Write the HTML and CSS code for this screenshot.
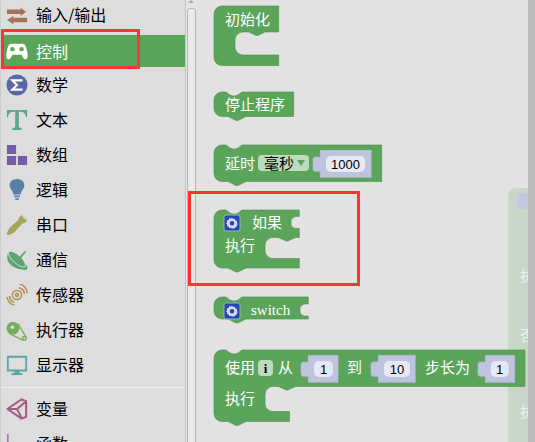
FILE: index.html
```html
<!DOCTYPE html>
<html lang="zh">
<head>
<meta charset="utf-8">
<title>Blocks</title>
<link rel="stylesheet" href="styles.css">
</head>
<body>
<div class="app">
  <aside class="toolbox">
    <nav class="cats">
      <div class="cat"><svg class="ico" viewBox="0 0 24 24"><path fill="#a5745b" d="M1 6h15V4l6 4.500-6 4.500v-2H1zM23 15H8v-2l-7 4.500L8 22v-2h15z"/></svg><span>输入/输出</span></div>
      <div class="cat on"><svg class="ico" viewBox="0 0 24 24"><path fill="#fff" d="M6 4h12c3 0 4 3 5 8s1 8-1 9-4-3-5-5H7c-1 2-3 6-5 5s-2-4-1-9 2-8 5-8z"/><circle cx="7" cy="10" r="2.400" fill="#5ba55b"/><circle cx="17" cy="10" r="2.400" fill="#5ba55b"/></svg><span>控制</span></div>
      <div class="cat"><svg class="ico" viewBox="0 0 24 24"><circle cx="12" cy="12" r="11.500" fill="#5b67a5"/><path fill="none" stroke="#fff" stroke-width="2.400" d="M18 7H7l5 5-5 5h11"/></svg><span>数学</span></div>
      <div class="cat"><svg class="ico" viewBox="0 0 24 24"><path fill="#5ba58c" d="M1 1h22v8h-1c-1-4-2-6-7-6h-1v17l3 1v2H7v-2l3-1V3H9C4 3 3 5 2 9H1z"/></svg><span>文本</span></div>
      <div class="cat"><svg class="ico" viewBox="0 0 24 24"><path fill="#745ba5" d="M1 1h10v10H1zM1 13h10v10H1zM13 13h10v10H13z"/></svg><span>数组</span></div>
      <div class="cat"><svg class="ico" viewBox="0 0 24 24"><path fill="#5b80a5" d="M12 0c5 0 8 3 8 7 0 4-4 6-4 10H8c0-4-4-6-4-10 0-4 3-7 8-7z"/><path fill="#5b80a5" d="M9 18h6v2H9zM10 21h4v2h-4z"/></svg><span>逻辑</span></div>
      <div class="cat"><svg class="ico" viewBox="0 0 24 24"><path fill="#a5a55b" d="M17 1l6 6-3 3-2 0-7 8c-3 3-6 5-10 5 0-4 2-7 5-10l8-7 0-2z"/><path fill="none" stroke="#ddd" d="M18 3l3 3"/></svg><span>串口</span></div>
      <div class="cat"><svg class="ico" viewBox="0 0 24 24"><path fill="#5ba574" d="M2 5c-3 8 3 17 20 18 1-1 2-3 1-5L2 5z"/><ellipse cx="12" cy="11" rx="12" ry="4.500" transform="rotate(42 12 11)" fill="#5ba574" stroke="#eee" stroke-width=".8"/><path fill="#5ba574" d="M13 10l8-8 1 1-7 9z"/></svg><span>通信</span></div>
      <div class="cat"><svg class="ico" viewBox="0 0 24 24"><g fill="none" stroke="#b08d50" stroke-width="1.600"><circle cx="12" cy="12" r="1.600"/><circle cx="12" cy="12" r="5"/><path d="M14 4c4 1 6 4 6 7M15 0c5 1 8 6 8 10M4 13c0 3 2 6 5 7M1 14c1 5 4 8 8 9"/></g></svg><span>传感器</span></div>
      <div class="cat"><svg class="ico" viewBox="0 0 24 24"><circle cx="7.500" cy="10" r="7" fill="#7bac5f"/><circle cx="7" cy="9" r="2" fill="#ddd"/><circle cx="20" cy="21" r="2" fill="none" stroke="#7bac5f" stroke-width="1.600"/><path fill="none" stroke="#7bac5f" stroke-width="1.600" d="M13 5l9 15M4 16l14 7"/></svg><span>执行器</span></div>
      <div class="cat"><svg class="ico" viewBox="0 0 24 24"><path fill="#5ba5a5" d="M1 2h22v17H1zM3 4v13h18V4zM9 19h6v2h3v2H6v-2h3z"/></svg><span>显示器</span></div>
      <hr class="sep">
      <div class="cat"><svg class="ico" viewBox="0 0 24 24"><path fill="none" stroke="#a55b80" stroke-width="2.200" stroke-linejoin="round" d="M1.500 12L17 1.500l5 2v17l-5 2zM1.500 12H12L22 3.500M12 12l5.500 10.500"/></svg><span>变量</span></div>
      <div class="cat"><svg class="ico" viewBox="0 0 24 24"><path fill="none" stroke="#995ba5" stroke-width="1.400" d="M2 1v23M7 12l3 8 3-8M14 12l7 9M21 12l-7 9"/></svg><span>函数</span></div>
    </nav>
    <div class="toolbar-scroll"><div class="arrow"></div><div class="thumb"></div></div>
  </aside>

  <main class="workspace">
    <svg class="canvas" width="339" height="442" viewBox="196 0 339 442">
      <!-- ghost block behind -->
      <path class="ghost" d="M508 196a8 8 0 0 1 8-8h12v254h-20z"/>
      <rect class="ghost-ico" x="518" y="193" width="12" height="16" rx="2"/>
      <text class="ghost-t" x="520" y="281">执</text>
      <text class="ghost-t" x="520" y="341">否</text>
      <text class="ghost-t" x="520" y="417">执</text>

      <!-- 初始化 -->
      <path class="blk" d="M222 6H278.700V32H265l-4 2-3 1.500h-2l-3-1.500-4-2h-6a8 8 0 0 0-8 8v7a8 8 0 0 0 8 8H278.700V65.500H222a8 8 0 0 1-8-8V14a8 8 0 0 1 8-8z"/>
      <text class="t" x="225" y="25">初始化</text>

      <!-- 停止程序 -->
      <path class="blk" d="M222 92h4l4 3 3 1h2l3-1 4-3H293.700V116.500H246l-4 2-4 2h-2l-4-2-4-2h-6a8 8 0 0 1-8-8V100a8 8 0 0 1 8-8z"/>
      <text class="t" x="225" y="110">停止程序</text>

      <!-- 延时 -->
      <path class="blk" d="M222 145h4l4 3 3 1h2l3-1 4-3H381.700V181.500H246l-4 2-4 2h-2l-4-2-4-2h-6a8 8 0 0 1-8-8V153a8 8 0 0 1 8-8z"/>
      <text class="t" x="225" y="169">延时</text>
      <rect class="fld" x="258" y="155" width="51" height="16" rx="4"/>
      <text class="t dk" x="264" y="169">毫秒</text>
      <path class="arw" d="M297 160h8l-4 6z"/>
      <path class="sock" d="M320 150h51.700v27.700H320v-6h-5a3 3 0 0 1-2.300-3v-9a3 3 0 0 1 2.300-3h5z"/>
      <rect class="inp" x="326" y="156" width="39" height="16" rx="5"/>
      <text class="n" x="345.500" y="169">1000</text>

      <!-- 如果 -->
      <path class="blk" d="M222 210h4l4 3 3 1h2l3-1 4-3H299.300V216.500h-4q-4 1-4.300 4v4q.3 3 4.300 4h4V237.500H296l-5 2-3 1.500h-2l-3-1.500-5-2h-5a8 8 0 0 0-8 8v5a8 8 0 0 0 8 8H299.300V268H246l-4 2-4 2h-2l-4-2-4-2h-6a8 8 0 0 1-8-8V218a8 8 0 0 1 8-8z"/>
      <g transform="translate(224 215)"><rect class="mut" width="16" height="16" rx="2"/><path class="gear" d="M8 2.500l1 1.600 1.900-.4.500 1.800 1.800.5-.4 1.900 1.200 1.100-1.200 1.100.2 1.400-1.600.6-.5 1.400-1.900-.2L8 14l-1-1.200-1.900.2-.5-1.400-1.600-.6.2-1.400L2 8.500l1.200-1.100-.4-1.900 1.800-.5.5-1.800 1.900.4zM8 6a2.300 2.300 0 1 0 0 4.600A2.300 2.300 0 0 0 8 6z"/></g>
      <text class="t" x="252" y="228">如果</text>
      <text class="t" x="225" y="251">执行</text>

      <!-- switch -->
      <path class="blk" d="M222 297h4l4 3 3 1h2l3-1 4-3H308.300V304h-4q-4 1-4.300 4v4q.3 3 4.300 4h4V319H246l-4 2-4 2h-2l-4-2-4-2h-6a8 8 0 0 1-8-8V305a8 8 0 0 1 8-8z"/>
      <g transform="translate(224 303)"><rect class="mut" width="16" height="16" rx="2"/><path class="gear" d="M8 2.500l1 1.600 1.900-.4.500 1.800 1.800.5-.4 1.900 1.200 1.100-1.200 1.100.2 1.400-1.600.6-.5 1.400-1.900-.2L8 14l-1-1.200-1.900.2-.5-1.400-1.600-.6.2-1.400L2 8.500l1.200-1.100-.4-1.900 1.800-.5.5-1.800 1.900.4zM8 6a2.300 2.300 0 1 0 0 4.600A2.300 2.300 0 0 0 8 6z"/></g>
      <text class="t sw" x="251" y="315">switch</text>

      <!-- 使用 i 从 -->
      <path class="blk" d="M222 350h4l4 3 3 1h2l3-1 4-3H525V386.500H296l-5 2-3 1.500h-2l-3-1.500-5-2h-5a8 8 0 0 0-8 8v9a8 8 0 0 0 8 8h16.500V421.500H246l-4 2-4 2h-2l-4-2-4-2h-6a8 8 0 0 1-8-8V358a8 8 0 0 1 8-8z"/>
      <text class="t" x="225" y="373">使用</text>
      <rect class="fld" x="258" y="360" width="15" height="16" rx="4"/>
      <text class="n sm" x="265.500" y="373">i</text>
      <text class="t" x="278" y="373">从</text>
      <path class="sock" d="M308 355h30.300v27.700H308v-6h-5a3 3 0 0 1-2.300-3v-9a3 3 0 0 1 2.300-3h5z"/>
      <rect class="inp" x="314" y="361" width="19" height="16" rx="5"/>
      <text class="n" x="323.500" y="374">1</text>
      <text class="t" x="347" y="373">到</text>
      <path class="sock" d="M378 355h37.700v27.700H378v-6h-5a3 3 0 0 1-2.300-3v-9a3 3 0 0 1 2.300-3h5z"/>
      <rect class="inp" x="384" y="361" width="26" height="16" rx="5"/>
      <text class="n" x="397" y="374">10</text>
      <text class="t" x="425" y="373">步长为</text>
      <path class="sock" d="M485 355h30v27.700h-30v-6h-5a3 3 0 0 1-2.300-3v-9a3 3 0 0 1 2.300-3h5z"/>
      <rect class="inp" x="490.700" y="361" width="18" height="16" rx="5"/>
      <text class="n" x="499.700" y="374">1</text>
      <text class="t" x="225" y="404">执行</text>
    </svg>
    <div class="ws-scroll"></div>
  </main>
</div>
<div class="mark mark-a"></div>
<div class="mark mark-b"></div>
</body>
</html>
```
FILE: styles.css
```css
* { box-sizing: border-box; }
html, body { margin: 0; height: 100%; overflow: hidden; }
body { font-family: "Noto Sans CJK SC", "Liberation Sans", sans-serif; background: #e2e2e2; }
.app { display: flex; width: 535px; height: 442px; overflow: hidden; }
.toolbox { display: flex; width: 196px; flex: none; background: #ddd; border-left: 1px solid #ccc; }
.cats { width: 184px; flex: none; margin-top: -3px; }
.cat { display: flex; align-items: center; gap: 8px; height: 35px; padding-left: 5px; font-size: 16px; line-height: 35px; color: #000; }
.cat.on { background: #5ba55b; color: #fff; height: 32px; margin-top: 3px; }
.ico { width: 22px; height: 22px; flex: none; }
.sep { height: 1px; border: 0; margin: 5px 0 3px; background: #eee; }
.toolbar-scroll { width: 11px; margin-left: auto; background: #e6e6e6; border-left: 1px solid #c4c4c4; }
.arrow { width: 0; height: 0; margin: 0 0 5px 2px; border-left: 3px solid transparent; border-right: 3px solid transparent; border-bottom: 3px solid #a8a8a8; }
.thumb { margin-left: 1px; height: 500px; width: 9px; background: #e9e9e9; border: 1px solid #b4b4b4; border-radius: 3px; }
.workspace { flex: 1; position: relative; background: #e2e2e2; overflow: hidden; }
.canvas { display: block; }
.ws-scroll { position: absolute; top: 0; right: 0; bottom: 0; width: 7px; background: #bbb; }
.blk { fill: #5ba55b; stroke: #4f8f4f; stroke-width: .6; }
.ghost { fill: #c8d6c8; }
.ghost-ico { fill: #c3c8de; }
.ghost-t { font-size: 15px; fill: #eef2ee; }
.t { font-size: 15px; fill: #fff; }
.t.dk { fill: #000; }
.t.sw { font-family: "Liberation Serif", serif; font-size: 15px; }
.fld { fill: #bddcbd; }
.arw { fill: #5ba55b; }
.sock { fill: #bfc4de; stroke: #8d9fa0; stroke-width: .5; }
.inp { fill: #e6e9f5; }
.n { font-family: "Liberation Sans", sans-serif; font-size: 13px; fill: #000; text-anchor: middle; }
.n.sm { font-family: "Liberation Serif", serif; font-weight: bold; }
.mut { fill: #2347b5; stroke: #9db6b0; stroke-width: 1; }
.gear { fill: #d5dcea; fill-rule: evenodd; }
.mark { position: absolute; border: 3px solid #f33; pointer-events: none; }
.mark-a { left: 1px; top: 29px; width: 139px; height: 40px; }
.mark-b { left: 188px; top: 191px; width: 172px; height: 95px; }
```
